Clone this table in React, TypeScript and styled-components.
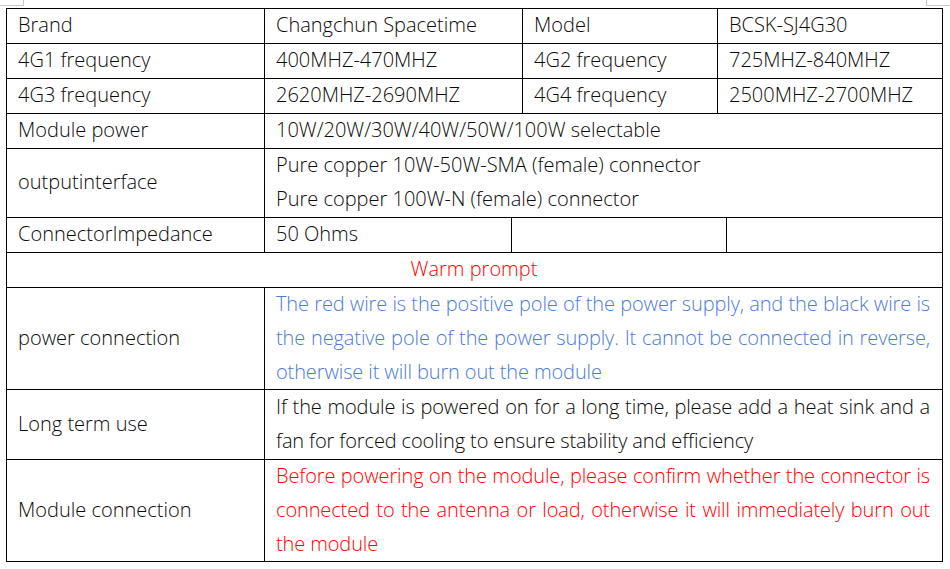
import styled, { createGlobalStyle } from 'styled-components'

const GlobalStyle = createGlobalStyle`
  html, body {
    margin: 0;
    padding: 0;
    background: #ffffff;
  }
  body {
    font-family: "Open Sans", "Noto Sans", "Liberation Sans", sans-serif;
    font-weight: 300;
    color: #000000;
  }
`

const Page = styled.div`
  position: relative;
  width: 950px;
  height: 569px;
  padding: 8px 0 0 6px;
  box-sizing: border-box;
`

// Word-style corner marks at the page edge
const CornerMark = styled.span<{ $side: 'left' | 'right' }>`
  position: absolute;
  top: 0;
  ${(p) => (p.$side === 'left' ? 'left: 0;' : 'right: 0;')}
  width: 24px;
  height: 6px;
  box-sizing: border-box;
  border-bottom: 1px solid #c8c8c8;
  ${(p) =>
    p.$side === 'left'
      ? 'border-right: 1px solid #c8c8c8;'
      : 'border-left: 1px solid #c8c8c8;'}
`

const Table = styled.div`
  display: grid;
  grid-template-columns: 258px 247px 11px 195px 9px 216px;
  grid-template-rows: 35px 35px 35px 35px 69px 35px 35px 102px 70px 102px;
  width: 937px;
  box-sizing: border-box;
  border-top: 1px solid #000;
  border-left: 1px solid #000;
`

const Cell = styled.div<{ $span?: number; $tone?: 'red' | 'blue'; $center?: boolean }>`
  grid-column: span ${(p) => p.$span ?? 1};
  box-sizing: border-box;
  border-right: 1px solid #000;
  border-bottom: 1px solid #000;
  padding: 0 12px 2px 11px;
  display: flex;
  flex-direction: column;
  justify-content: center;
  align-items: ${(p) => (p.$center ? 'center' : 'stretch')};
  font-size: 20px;
  line-height: 34px;
  white-space: nowrap;
  color: ${(p) =>
    p.$tone === 'red' ? '#ff0000' : p.$tone === 'blue' ? '#4d7bd6' : '#0a0a0a'};
`

// one visual line of a justified paragraph
const Line = styled.span<{ $fill?: boolean }>`
  display: block;
  letter-spacing: -0.12px;
  text-align: justify;
  text-align-last: ${(p) => (p.$fill ? 'justify' : 'left')};
`

type Row = { label: string; lines: string[]; tone?: 'red' | 'blue' }

const notes: Row[] = [
  {
    label: 'power connection',
    tone: 'blue',
    lines: [
      'The red wire is the positive pole of the power supply, and the black wire is',
      'the negative pole of the power supply. It cannot be connected in reverse,',
      'otherwise it will burn out the module',
    ],
  },
  {
    label: 'Long term use',
    lines: [
      'If the module is powered on for a long time, please add a heat sink and a',
      'fan for forced cooling to ensure stability and efficiency',
    ],
  },
  {
    label: 'Module connection',
    tone: 'red',
    lines: [
      'Before powering on the module, please confirm whether the connector is',
      'connected to the antenna or load, otherwise it will immediately burn out',
      'the module',
    ],
  },
]

export default function App() {
  return (
    <>
      <GlobalStyle />
      <Page>
        <CornerMark $side="left" />
        <CornerMark $side="right" />
        <Table>
          <Cell>Brand</Cell>
          <Cell $span={2}>Changchun Spacetime</Cell>
          <Cell>Model</Cell>
          <Cell $span={2}>BCSK-SJ4G30</Cell>

          <Cell>4G1 frequency</Cell>
          <Cell $span={2}>400MHZ-470MHZ</Cell>
          <Cell>4G2 frequency</Cell>
          <Cell $span={2}>725MHZ-840MHZ</Cell>

          <Cell>4G3 frequency</Cell>
          <Cell $span={2}>2620MHZ-2690MHZ</Cell>
          <Cell>4G4 frequency</Cell>
          <Cell $span={2}>2500MHZ-2700MHZ</Cell>

          <Cell>Module power</Cell>
          <Cell $span={5}>10W/20W/30W/40W/50W/100W selectable</Cell>

          <Cell>outputinterface</Cell>
          <Cell $span={5}>
            <span>Pure copper 10W-50W-SMA (female) connector</span>
            <span>Pure copper 100W-N (female) connector</span>
          </Cell>

          <Cell>ConnectorImpedance</Cell>
          <Cell>50 Ohms</Cell>
          <Cell $span={3} />
          <Cell />

          <Cell $span={6} $tone="red" $center>
            Warm prompt
          </Cell>

          {notes.map((row) => (
            <>
              <Cell key={row.label}>{row.label}</Cell>
              <Cell key={row.label + '-text'} $span={5} $tone={row.tone}>
                {row.lines.map((l, i) => (
                  <Line key={i} $fill={i < row.lines.length - 1}>
                    {l}
                  </Line>
                ))}
              </Cell>
            </>
          ))}
        </Table>
      </Page>
    </>
  )
}
